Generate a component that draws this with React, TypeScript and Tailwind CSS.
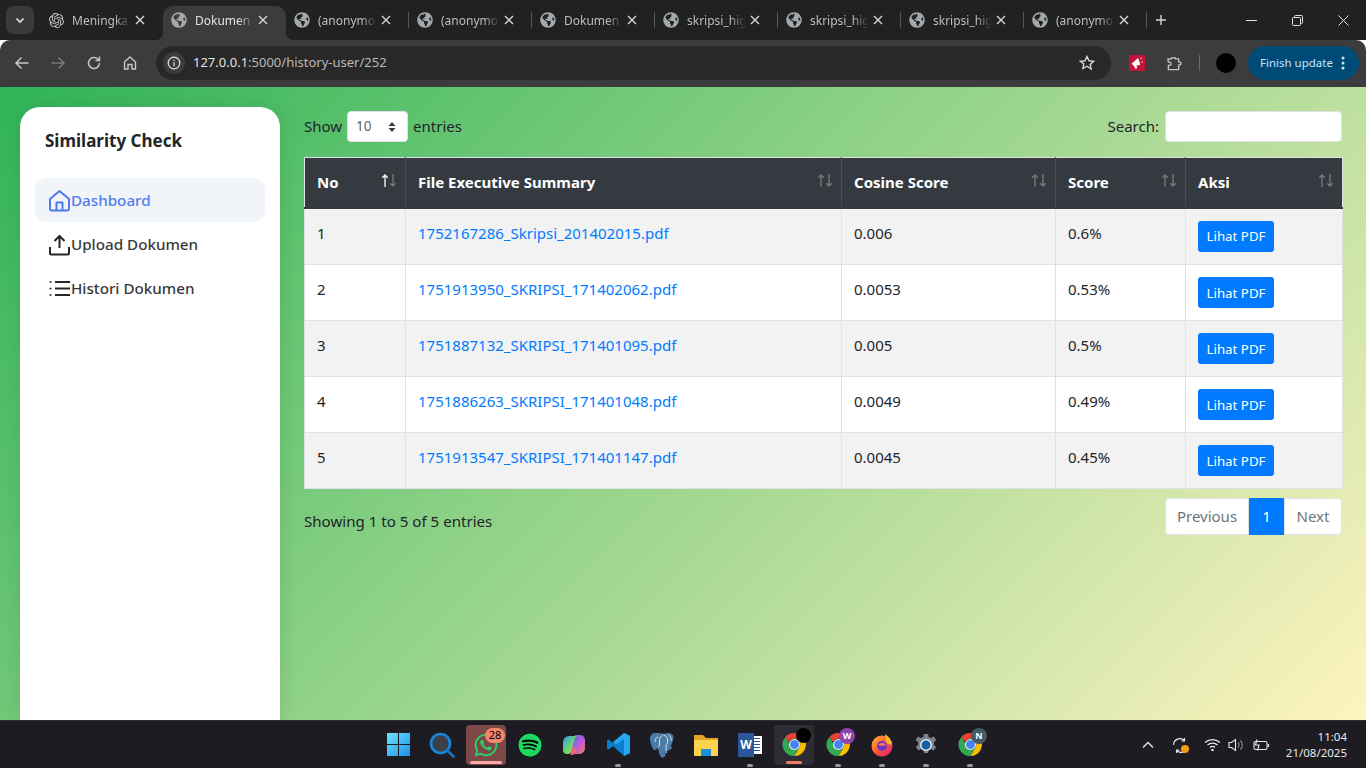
import React from "react";
import { FaGlobeAmericas, FaWhatsapp, FaSpotify } from "react-icons/fa";
import { SiOpenai } from "react-icons/si";

const tabs = [
  { t: "Meningka", ai: true },
  { t: "Dokumen", active: true },
  { t: "(anonymo" },
  { t: "(anonymo" },
  { t: "Dokumen" },
  { t: "skripsi_hig" },
  { t: "skripsi_hig" },
  { t: "skripsi_hig" },
  { t: "(anonymo" },
];

const rows = [
  ["1", "1752167286_Skripsi_201402015.pdf", "0.006", "0.6%"],
  ["2", "1751913950_SKRIPSI_171402062.pdf", "0.0053", "0.53%"],
  ["3", "1751887132_SKRIPSI_171401095.pdf", "0.005", "0.5%"],
  ["4", "1751886263_SKRIPSI_171401048.pdf", "0.0049", "0.49%"],
  ["5", "1751913547_SKRIPSI_171401147.pdf", "0.0045", "0.45%"],
];

const heads = [
  { t: "No", w: "w-[101px]", on: true },
  { t: "File Executive Summary", w: "w-[436px]" },
  { t: "Cosine Score", w: "w-[214px]" },
  { t: "Score", w: "w-[130px]" },
  { t: "Aksi", w: "w-[157px]" },
];

function Chrome({ size = 30 }: { size?: number }) {
  return (
    <svg width={size} height={size} viewBox="0 0 48 48">
      <path d="M24 2a22 22 0 0 1 19.050 11H24a11 11 0 0 0-10.200 6.900L6.600 9.400A22 22 0 0 1 24 2z" fill="#ea4335" />
      <path d="M43.050 13A22 22 0 0 1 24 46l9.500-16.500A11 11 0 0 0 33.500 18.500 11 11 0 0 0 31 13z" fill="#fbbc04" />
      <path d="M24 46A22 22 0 0 1 6.600 9.400l9.900 17.100A11 11 0 0 0 24 35a11 11 0 0 0 9.500-5.500z" fill="#34a853" />
      <circle cx="24" cy="24" r="10.500" fill="#fff" />
      <circle cx="24" cy="24" r="8.500" fill="#4285f4" />
    </svg>
  );
}

function TaskSlot({ children, dot, className = "" }: { children: React.ReactNode; dot?: boolean; className?: string }) {
  return (
    <div className={`relative flex h-12 w-11 items-center justify-center ${className}`}>
      {children}
      {dot && <span className="absolute bottom-[2px] left-[19px] h-[3px] w-[6px] rounded-full bg-[#9a9a9e]" />}
    </div>
  );
}

function Sort({ on }: { on?: boolean }) {
  return (
    <svg width="16" height="13" viewBox="0 0 16 13" fill="none" strokeWidth="1.300">
      <path d="M4 13V1M1.300 3.700 4 1l2.700 2.700" stroke={on ? "#ffffff" : "#777c81"} />
      <path d="M12 0v12M9.300 9.300 12 12l2.700-2.700" stroke="#777c81" />
    </svg>
  );
}

export default function App() {
  return (
    <div className="flex h-[768px] w-[1366px] flex-col overflow-hidden font-['Noto_Sans',sans-serif] text-[15px] text-[#212529]">
      {/* tab strip */}
      <div className="flex h-10 shrink-0 items-end bg-[#202222]">
        <div className="flex h-10 w-10 items-center justify-center">
          <div className="flex h-7 w-7 items-center justify-center rounded-lg bg-[#3a3b3b]">
            <svg width="12" height="12" viewBox="0 0 12 12" fill="none" stroke="#e3e3e3" strokeWidth="1.600"><path d="M2.500 4.500 6 8l3.500-3.500" /></svg>
          </div>
        </div>
        {tabs.map((tab, i) => (
          <div
            key={i}
            className={`relative flex h-[34px] w-[123px] items-center pb-[6px] ${tab.active ? "rounded-t-[10px] bg-[#3c3c3c]" : ""}`}
          >
            {tab.active && (
              <>
                <span className="absolute bottom-0 -left-[8px] h-2 w-2 bg-[radial-gradient(circle_at_0_0,transparent_8px,#3c3c3c_8.500px)]" />
                <span className="absolute bottom-0 -right-[8px] h-2 w-2 bg-[radial-gradient(circle_at_100%_0,transparent_8px,#3c3c3c_8.500px)]" />
              </>
            )}
            <span className="ml-[7px] flex w-[18px] shrink-0 justify-center text-[#a4a7ab]">
              {tab.ai ? <SiOpenai size={15} className="text-[#c7c7c7]" /> : <FaGlobeAmericas size={16} />}
            </span>
            <span
              className={`ml-[7px] w-[60px] shrink-0 whitespace-nowrap pt-[1px] text-[12px] leading-[17px] [mask-image:linear-gradient(90deg,#000_72%,transparent_98%)] ${tab.active ? "text-[#e3e3e3]" : "text-[#bdbdbd]"}`}
            >
              {tab.t}
            </span>
            <svg className="ml-[3px] shrink-0" width="10" height="10" viewBox="0 0 10 10" stroke="#d5d5d5" strokeWidth="1.400"><path d="m1 1 8 8M9 1 1 9" /></svg>
            {i >= 2 && <span className="absolute right-0 top-[6px] h-[16px] w-[1px] bg-[#55585a]" />}
          </div>
        ))}
        <div className="flex h-[34px] w-7 items-center justify-center pb-[6px]">
          <svg width="12" height="12" viewBox="0 0 12 12" stroke="#d5d5d5" strokeWidth="1.400"><path d="M6 1v10M1 6h10" /></svg>
        </div>
        <div className="ml-auto flex h-10 text-[#e3e3e3]">
          <div className="flex w-[46px] items-center justify-center">
            <svg width="11" height="11" viewBox="0 0 11 11" stroke="#e3e3e3"><path d="M0 5.500h11" /></svg>
          </div>
          <div className="flex w-[46px] items-center justify-center">
            <svg width="11" height="11" viewBox="0 0 11 11" fill="none" stroke="#e3e3e3"><rect x=".5" y="2.500" width="8" height="8" rx="1" /><path d="M2.500 2.500v-1a1 1 0 0 1 1-1h6a1 1 0 0 1 1 1v6a1 1 0 0 1-1 1h-1" /></svg>
          </div>
          <div className="flex w-[46px] items-center justify-center">
            <svg width="11" height="11" viewBox="0 0 11 11" stroke="#e3e3e3"><path d="m.5.5 10 10M10.500.5l-10 10" /></svg>
          </div>
        </div>
      </div>

      {/* toolbar */}
      <div className="flex h-[47px] shrink-0 items-center rounded-t-[10px] bg-[#3c3c3c] pb-[1px] pl-[4px]">
        <div className="flex h-9 w-9 items-center justify-center">
          <svg width="16" height="16" viewBox="0 0 16 16" fill="none" stroke="#c7c7c7" strokeWidth="1.500"><path d="M14.500 8H2M7.500 2.500 2 8l5.500 5.500" /></svg>
        </div>
        <div className="flex h-9 w-9 items-center justify-center">
          <svg width="16" height="16" viewBox="0 0 16 16" fill="none" stroke="#7a7a7a" strokeWidth="1.500"><path d="M1.500 8H14M8.500 2.500 14 8l-5.500 5.500" /></svg>
        </div>
        <div className="flex h-9 w-9 items-center justify-center">
          <svg width="16" height="16" viewBox="0 0 16 16" fill="none" stroke="#c7c7c7" strokeWidth="1.500"><path d="M13.500 8A5.500 5.500 0 1 1 11.800 4L13.500 5.500M13.500 1.500v4h-4" /></svg>
        </div>
        <div className="flex h-9 w-9 items-center justify-center">
          <svg width="16" height="16" viewBox="0 0 16 16" fill="none" stroke="#c7c7c7" strokeWidth="1.400"><path d="M2.500 7 8 2l5.500 5v7h-3.500V9.500H6V14H2.500z" /></svg>
        </div>
        <div className="ml-[8px] flex h-[34px] w-[955px] items-center rounded-full bg-[#282828] pl-[7px] pr-[16px]">
          <div className="flex h-[22px] w-[22px] items-center justify-center rounded-full bg-[#3c3c3c]">
            <svg width="14" height="14" viewBox="0 0 14 14" fill="none" stroke="#e3e3e3" strokeWidth="1.200"><circle cx="7" cy="7" r="5.800" /><path d="M7 6.200v4M7 3.700v1.300" /></svg>
          </div>
          <span className="ml-2 text-[13px] text-[#e3e3e3]">
            127.0.0.1<span className="text-[#b9b9b9]">:5000/history-user/252</span>
          </span>
          <svg className="ml-auto" width="16" height="16" viewBox="0 0 16 16" fill="none" stroke="#d5d5d5" strokeWidth="1.400"><path d="m8 1.500 2 4.300 4.600.5-3.400 3.100.9 4.600L8 11.200 3.900 13.500l.9-4.600L1.400 6.300 6 5.800z" /></svg>
        </div>
        <div className="ml-[18px] flex h-4 w-4 items-center justify-center bg-[#c0143c]">
          <svg width="14" height="14" viewBox="0 0 14 14" fill="#fff"><path d="m2 7.500 6-5 2 6-6 1.500zM10 3l2-1M11 6h2M4.500 10l1 2.500 1.500-.5-1-2.500z" stroke="#fff" strokeWidth=".6" /></svg>
        </div>
        <div className="ml-[21px] flex h-4 w-4 items-center justify-center">
          <svg width="17" height="17" viewBox="0 0 17 17" fill="none" stroke="#c7c7c7" strokeWidth="1.400" strokeLinejoin="round"><path d="M2 3.500h4V2.700a1.400 1.400 0 0 1 0-.2h4v1h3.500v3.500h1a1.500 1.500 0 0 1 0 3h-1V15H2.500v-4.500h1.200a1.700 1.700 0 0 0 0-3.400H2.500z" /></svg>
        </div>
        <div className="ml-[17px] h-[16px] w-[1px] bg-[#6a6a6a]" />
        <div className="ml-[16px] h-5 w-5 rounded-full bg-black" />
        <div className="ml-[12px] flex h-[34px] w-[111px] items-center rounded-full bg-[#004a77] pl-3">
          <span className="whitespace-nowrap text-[11.500px] text-[#c2e7ff]">Finish update</span>
          <svg className="ml-[8px]" width="4" height="14" viewBox="0 0 4 14" fill="#c2e7ff"><circle cx="2" cy="2" r="1.500" /><circle cx="2" cy="7" r="1.500" /><circle cx="2" cy="12" r="1.500" /></svg>
        </div>
      </div>

      {/* page */}
      <div className="flex min-h-0 flex-1 overflow-hidden bg-[linear-gradient(135deg,#2fb457_0%,#fff4c0_100%)] pl-5 pt-5">
        <aside className="flex w-[260px] shrink-0 flex-col rounded-t-[20px] bg-white px-[15px] shadow-[0_0_20px_rgba(0,0,0,0.1)]">
          <h1 className="ml-[10px] mt-[19px] text-[17px] leading-[30px] font-bold text-[#212529]">Similarity Check</h1>
          <nav className="mt-[22px] flex flex-col text-[15.200px]">
            <a className="flex h-11 items-center rounded-xl bg-[#f1f4f9] pl-[13px] font-medium text-[#4f7cec]">
              <svg width="23" height="23" viewBox="0 0 23 23" fill="none" stroke="#4f7cec" strokeWidth="2" strokeLinejoin="round"><path d="M2 10 11.500 2 21 10v9.500a2 2 0 0 1-2 2H4a2 2 0 0 1-2-2z" /><path d="M8.500 21.500V13.500h6v8" /></svg>
              <span>Dashboard</span>
            </a>
            <a className="flex h-11 items-center pl-[13px] font-medium text-[#3a3a3a]">
              <svg width="23" height="23" viewBox="0 0 23 23" fill="none" stroke="#262626" strokeWidth="2"><path d="M11.500 15V3M6.500 8l5-5 5 5M2 14v6a1.500 1.500 0 0 0 1.500 1.500h16A1.500 1.500 0 0 0 21 20v-6" /></svg>
              <span>Upload Dokumen</span>
            </a>
            <a className="flex h-11 items-center pl-[13px] font-medium text-[#3a3a3a]">
              <svg width="23" height="23" viewBox="0 0 23 23" fill="none" stroke="#262626" strokeWidth="2"><path d="M7 5h15M7 11.500h15M7 18h15" /><path d="M1.500 5h2M1.500 11.500h2M1.500 18h2" strokeWidth="1.500" /></svg>
              <span>Histori Dokumen</span>
            </a>
          </nav>
        </aside>

        <main className="ml-6 mt-1 w-[1038px] shrink-0">
          <div className="flex h-[31px] items-center justify-between">
            <div className="flex items-center">
              <span className="-mt-[1px]">Show</span>
              <div className="ml-[5px] flex h-[31px] w-[61px] items-center rounded-[4px] border border-[#dee2e6] bg-white pl-2 pr-[11px] text-[13.500px] text-[#5c636a]">
                <span>10</span>
                <svg className="ml-auto" width="8" height="12" viewBox="0 0 8 12" fill="#343a40"><path d="M4 1 7.500 5H.5zM4 11 .5 7h7z" /></svg>
              </div>
              <span className="ml-[5px] -mt-[1px]">entries</span>
            </div>
            <div className="flex items-center">
              <span>Search:</span>
              <div className="ml-[6px] h-[31px] w-[177px] rounded-[4px] border border-[#dee2e6] bg-white" />
            </div>
          </div>

          <table className="mt-[15px] w-[1038px] table-fixed border-collapse">
            <thead>
              <tr className="h-[50px] bg-[#343a40] text-white">
                {heads.map((h) => (
                  <th key={h.t} className={`${h.w} border border-[#dee2e6] border-b-[#32383e] border-x-[#454d55] first:border-l-[#dee2e6] last:border-r-[#dee2e6] border-b-2 pl-3 pr-2 text-left align-middle`}>
                    <div className="flex items-center justify-between">
                      <span className="text-[15px] font-bold">{h.t}</span>
                      <span className="-mt-[3px] flex">
                        <Sort on={h.on} />
                      </span>
                    </div>
                  </th>
                ))}
              </tr>
            </thead>
            <tbody>
              {rows.map((r, i) => (
                <tr key={r[0]} className={`${i === 0 ? "h-[57px]" : "h-[56px]"} ${i % 2 === 0 ? "bg-[#f2f2f2]" : "bg-white"}`}>
                  <td className="border border-[#dee2e6] pl-3 pt-3 align-top leading-6">{r[0]}</td>
                  <td className="border border-[#dee2e6] pl-3 pt-3 align-top leading-6 text-[#007bff]">{r[1]}</td>
                  <td className="border border-[#dee2e6] pl-3 pt-3 align-top leading-6">{r[2]}</td>
                  <td className="border border-[#dee2e6] pl-3 pt-3 align-top leading-6">{r[3]}</td>
                  <td className="border border-[#dee2e6] pl-3 pt-3 align-top leading-6">
                    <button className="flex h-[31px] w-[76px] items-center justify-center rounded-[3px] bg-[#007bff] text-[13.300px] text-white">Lihat PDF</button>
                  </td>
                </tr>
              ))}
            </tbody>
          </table>

          <div className="mt-[9px] flex items-start justify-between">
            <span className="pt-[12px] text-[15.100px] leading-[22px]">Showing 1 to 5 of 5 entries</span>
            <div className="flex h-[37px] items-stretch">
              <span className="flex w-[84px] items-center justify-center rounded-l-[4px] border border-[#dee2e6] bg-white text-[#6c757d]">Previous</span>
              <span className="flex w-[35px] items-center justify-center bg-[#007bff] text-white">1</span>
              <span className="flex w-[58px] items-center justify-center rounded-r-[4px] border border-[#dee2e6] bg-white text-[#6c757d]">Next</span>
            </div>
          </div>
        </main>
      </div>

      {/* taskbar */}
      <div className="flex h-12 shrink-0 items-center border-t border-[#2e2e33] bg-[#1c1c22]">
        <div className="w-[376px] shrink-0" />
        <div className="flex">
          <TaskSlot>
            <svg width="25" height="25" viewBox="0 0 25 25"><defs><linearGradient id="w" x1="0" y1="0" x2="1" y2="1"><stop offset="0" stopColor="#6fe3fb" /><stop offset="1" stopColor="#1a90ea" /></linearGradient></defs><path fill="url(#w)" d="M1 1h11v11H1zM13 1h11v11H13zM1 13h11v11H1zM13 13h11v11H13z" /></svg>
          </TaskSlot>
          <TaskSlot>
            <svg width="26" height="26" viewBox="0 0 26 26" fill="#3b4048" stroke="#1b84d8" strokeWidth="2.600"><circle cx="11.500" cy="11.500" r="9.500" /><path d="m18.500 18.500 6 6" stroke="#1e70b8" strokeLinecap="round" /></svg>
          </TaskSlot>
          <TaskSlot>
            <div className="relative flex h-10 w-10 items-center justify-center rounded-[4px] bg-[#7c4848]">
              <FaWhatsapp size={26} className="text-[#25d366]" />
              <span className="absolute left-[19px] top-[3px] flex h-[15px] w-[20px] items-center justify-center rounded-full bg-[#f5856a] text-[11px] text-black">28</span>
              <span className="absolute bottom-[1px] left-[4px] h-[3px] w-8 rounded-full bg-[#fca5a5]" />
            </div>
          </TaskSlot>
          <TaskSlot>
            <FaSpotify size={24} className="rounded-full bg-black text-[#1ed760]" />
          </TaskSlot>
          <TaskSlot>
            <svg width="24" height="24" viewBox="0 0 24 24"><defs><linearGradient id="c1" x1="0" y1="0" x2="1" y2="1"><stop offset="0" stopColor="#2f9ff5" /><stop offset=".55" stopColor="#6fd66a" /><stop offset="1" stopColor="#f8c23a" /></linearGradient><linearGradient id="c2" x1="0" y1="0" x2="1" y2="1"><stop offset="0" stopColor="#3e6cf0" /><stop offset=".6" stopColor="#c65bd6" /><stop offset="1" stopColor="#f5803e" /></linearGradient></defs><path fill="url(#c2)" d="M13 2h5a5 5 0 0 1 5 5v7a6 6 0 0 1-6 7h-7a3 3 0 0 1-2-2l5-15a3 3 0 0 1 0-2z" /><path fill="url(#c1)" d="M7 3h8a3 3 0 0 0-2 2L9 19a3 3 0 0 1-3 2H5a4 4 0 0 1-4-4V9a6 6 0 0 1 6-6z" /><path fill="#f06a6a" d="M9 15h6l-2 5a3 3 0 0 1-3 2H8l2-3z" opacity=".85" /></svg>
          </TaskSlot>
          <TaskSlot dot>
            <svg width="25" height="25" viewBox="0 0 25 25"><path fill="#0a7fd0" d="m18 1 6 3v17l-6 3L7 14l-4.500 3.500L1 16.500V8.500L2.500 7.500 7 11z" /><path fill="#2ba5ef" d="m18 1 6 3v17l-6 3V7l-8 5.500-3-2.500z" /></svg>
          </TaskSlot>
          <TaskSlot>
            <svg width="27" height="26" viewBox="0 0 27 26"><path fill="#4a7ba7" d="M6 1c-3 0-5 2.500-5 6 0 3 1.500 8 3.500 10.500.8 1 2 .8 3-.5l1.500-1.500c.4 3 1 7.500 3 9.500 2 1 4.500.5 4.500-3v-3c3 0 5-1 6.500-3 .6-.8-.5-1.500-1.500-1.300 1.500-3 3-7 3-9.500C25 3 22 1 19 1c-1.500 0-3 .3-4 1C13 1 9 1 6 1z" /><path fill="none" stroke="#dbe7f2" strokeWidth="1" d="M14.500 2.500C11 4 10 8 10.500 12c.2 2-1 3-1.800 3.500M15 3c3 1.500 4 4 3.500 7-.3 2-1.500 3-1.500 5 0 1.500 0 4 .5 6M19.500 3c2 1 3 3.500 2.500 6M9 5c-2 .5-3 2.500-3 5" /></svg>
          </TaskSlot>
          <TaskSlot>
            <svg width="26" height="24" viewBox="0 0 26 24"><path fill="#e0a526" d="M1 2h9l3 3h12v17H1z" /><path fill="#fbd24e" d="M1 7h24v15a1 1 0 0 1-1 1H2a1 1 0 0 1-1-1z" /><path fill="#1c8fdb" d="M8 16h10v7H8z" /></svg>
          </TaskSlot>
          <TaskSlot dot>
            <div className="relative flex h-6 w-[24px] items-center justify-end">
              <div className="flex h-[18px] w-[14px] flex-col justify-center gap-[2px] bg-white px-[2px]">
                <span className="h-[1px] bg-[#2b579a]" /><span className="h-[1px] bg-[#2b579a]" /><span className="h-[1px] bg-[#2b579a]" /><span className="h-[1px] bg-[#2b579a]" /><span className="h-[1px] bg-[#2b579a]" />
              </div>
              <span className="absolute left-0 top-0 flex h-6 w-[16px] items-center justify-center bg-[#2b579a] text-[12px] font-bold text-white">W</span>
            </div>
          </TaskSlot>
          <TaskSlot>
            <div className="relative flex h-10 w-10 items-center justify-center rounded-[4px] bg-[#2d2d33]">
              <Chrome size={25} />
              <span className="absolute right-[3px] top-[3px] h-[15px] w-[15px] rounded-full bg-black" />
              <span className="absolute bottom-[1px] left-[12px] h-[3px] w-4 rounded-full bg-[#f47c60]" />
            </div>
          </TaskSlot>
          <TaskSlot dot>
            <Chrome size={25} />
            <span className="absolute right-[5px] top-[7px] flex h-4 w-4 items-center justify-center rounded-full bg-[#8e44ad] text-[9px] font-bold text-white">W</span>
          </TaskSlot>
          <TaskSlot dot>
            <svg width="24" height="24" viewBox="0 0 24 24"><defs><linearGradient id="ff" x1="0" y1="0" x2="1" y2="1"><stop offset="0" stopColor="#ffbd2e" /><stop offset=".5" stopColor="#ff5634" /><stop offset="1" stopColor="#e31587" /></linearGradient></defs><circle cx="12" cy="13" r="10.500" fill="url(#ff)" /><path d="M15 1c3 2 6 5 7 9-1 3-3 2-6-1z" fill="#ffb32e" /><circle cx="12" cy="13" r="5" fill="#6b36c6" /><path d="M8 12c3-3 7-2 8 0l-4 1z" fill="#ff7a3a" /></svg>
          </TaskSlot>
          <TaskSlot dot>
            <svg width="24" height="24" viewBox="0 0 24 24"><path fill="#7a838c" d="M10 1h4l.7 3 2.200 1 2.800-1.500 2.500 3.500-2.200 2.100v2.800l2.200 2.100-2.500 3.500-2.800-1.500-2.200 1-.7 3h-4l-.7-3-2.200-1-2.800 1.500-2.500-3.500 2.200-2.100v-2.800L1.600 7l2.500-3.500L6.900 5l2.200-1z" /><circle cx="12" cy="12" r="6" fill="#e8eaed" /><circle cx="12" cy="12" r="4.500" fill="#155ea8" /></svg>
          </TaskSlot>
          <TaskSlot dot>
            <Chrome size={25} />
            <span className="absolute right-[5px] top-[7px] flex h-4 w-4 items-center justify-center rounded-full bg-[#455a64] text-[9px] font-bold text-white">N</span>
          </TaskSlot>
        </div>
        <div className="ml-[150px] flex items-center">
          <svg width="12" height="8" viewBox="0 0 12 8" fill="none" stroke="#e8e8e8" strokeWidth="1.400"><path d="m1 6.500 5-5 5 5" /></svg>
          <div className="relative ml-[18px] h-4 w-4">
            <svg width="17" height="17" viewBox="0 0 17 17" fill="none" stroke="#e8e8e8" strokeWidth="1.200"><path d="M1.500 8a6.500 6.500 0 0 1 11-4.500M15.500 9a6.500 6.500 0 0 1-11 4.500M12.500 1v3h-3M4.500 16v-3h3" /></svg>
            <span className="absolute -right-[1px] bottom-0 h-[8px] w-[8px] rounded-full bg-[#f59e0b]" />
          </div>
          <svg className="ml-[16px]" width="17" height="13" viewBox="0 0 17 13" fill="none" stroke="#e8e8e8" strokeWidth="1.200"><path d="M1 4.500a11 11 0 0 1 15 0M3.500 7a7.500 7.500 0 0 1 10 0M6 9.500a3.500 3.500 0 0 1 5 0" /><circle cx="8.500" cy="12" r=".7" fill="#e8e8e8" /></svg>
          <svg className="ml-[7px]" width="16" height="14" viewBox="0 0 16 14" fill="none" stroke="#e8e8e8" strokeWidth="1.100"><path d="M1 4.500h2.500L7.500 1.500v11L3.500 9.500H1z" /><path d="M10 4.500a3.500 3.500 0 0 1 0 5M12.500 2.500a6.500 6.500 0 0 1 0 9" stroke="#8d8d8d" /></svg>
          <svg className="ml-[9px]" width="17" height="12" viewBox="0 0 17 12" fill="none" stroke="#e8e8e8" strokeWidth="1.100"><rect x="1" y="2.500" width="13" height="8" rx="1.500" /><path d="M15.500 5v3M4 .5 2.500 6H6L4.500 11.500" /></svg>
        </div>
        <div className="ml-auto mr-[19px] flex flex-col items-end text-[11.500px] leading-[16px] text-[#e8e8e8]">
          <span>11:04</span>
          <span>21/08/2025</span>
        </div>
      </div>
    </div>
  );
}
